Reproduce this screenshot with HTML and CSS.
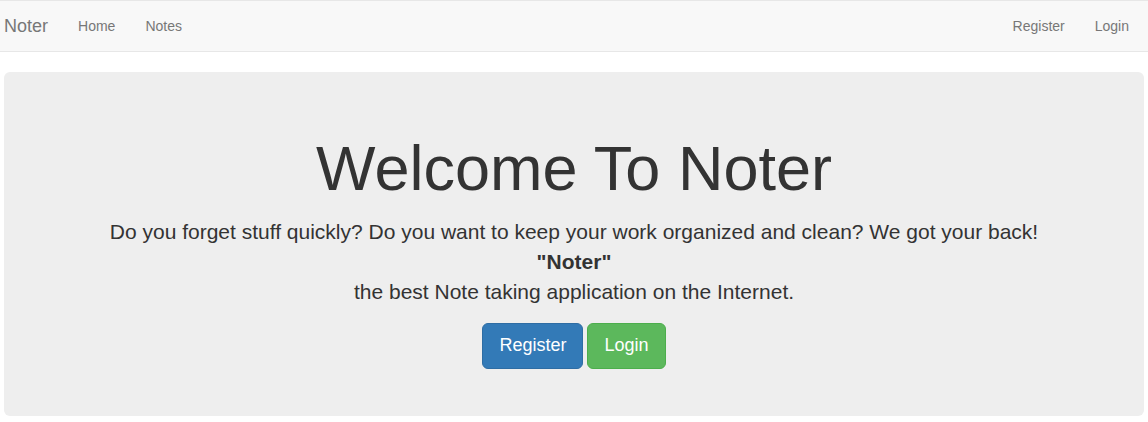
FILE: index.html
```html
<!DOCTYPE html>
<html lang="en">
<head>
    <meta charset="UTF-8">
    <meta name="viewport" content="width=device-width, initial-scale=1.0">
    <title>Noter</title>
    <link rel="stylesheet" href="styles.css">
</head>
<body>
    <nav class="navbar">
        <div class="nav-left">
            <a class="brand" href="#">Noter</a>
            <ul class="nav">
                <li><a href="#">Home</a></li>
                <li><a href="#">Notes</a></li>
            </ul>
        </div>
        <ul class="nav">
            <li><a href="#">Register</a></li>
            <li><a href="#">Login</a></li>
        </ul>
    </nav>

    <div class="jumbotron">
        <h1>Welcome To Noter</h1>
        <p>Do you forget stuff quickly? Do you want to keep your work organized and clean? We got your back!<br>
            <b>"Noter"</b><br>
            the best Note taking application on the Internet.</p>
        <div class="actions">
            <a class="btn btn-primary" href="#">Register</a>
            <a class="btn btn-success" href="#">Login</a>
        </div>
    </div>
</body>
</html>
```

FILE: styles.css
```css
* {
    box-sizing: border-box;
}

body {
    margin: 0;
    font-family: "Liberation Sans", Arial, sans-serif;
    font-size: 14px;
    line-height: 1.42857;
    color: #333;
    background-color: #fff;
}

a {
    text-decoration: none;
}

.navbar {
    display: flex;
    justify-content: space-between;
    height: 52px;
    margin-bottom: 20px;
    padding: 0 4px;
    background-color: #f8f8f8;
    border-top: 1px solid #e7e7e7;
    border-bottom: 1px solid #e7e7e7;
}

.nav-left {
    display: flex;
}

.brand {
    padding: 15px 15px 15px 0;
    font-size: 18px;
    line-height: 20px;
    color: #777;
}

.nav {
    display: flex;
    list-style: none;
    margin: 0;
    padding: 0;
}

.nav a {
    display: block;
    padding: 15px;
    line-height: 20px;
    color: #777;
}

.jumbotron {
    margin: 0 4px;
    padding: 48px 60px 47px;
    background-color: #eee;
    border-radius: 6px;
    text-align: center;
}

.jumbotron h1 {
    margin: 14px 0 14px;
    font-size: 63px;
    font-weight: 500;
    line-height: 1.1;
}

.jumbotron p {
    margin: 0 0 16px;
    font-size: 21px;
    font-weight: 200;
}

.jumbotron b {
    font-weight: 700;
}

.actions {
    display: flex;
    justify-content: center;
    gap: 4px;
}

.btn {
    display: inline-block;
    padding: 10px 16px;
    font-size: 18px;
    line-height: 1.3333;
    color: #fff;
    border: 1px solid transparent;
    border-radius: 6px;
}

.btn-primary {
    background-color: #337ab7;
    border-color: #2e6da4;
}

.btn-success {
    background-color: #5cb85c;
    border-color: #4cae4c;
}
```
